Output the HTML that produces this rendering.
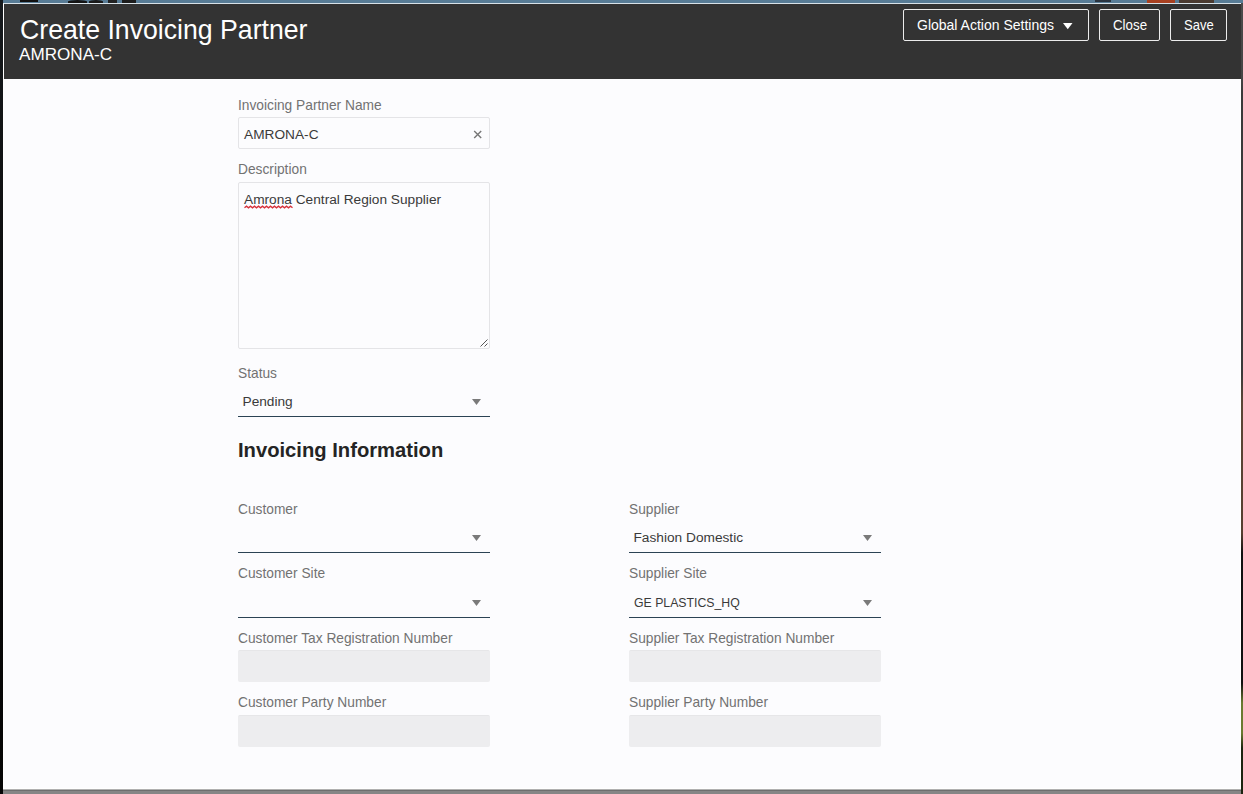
<!DOCTYPE html>
<html><head><meta charset="utf-8">
<style>
html,body{margin:0;padding:0;}
body{width:1243px;height:794px;position:relative;overflow:hidden;background:#2e3236;font-family:"Liberation Sans",sans-serif;}
.abs{position:absolute;}
.topstrip{left:0;top:0;width:1243px;height:3px;background:#587c96;}
.leftstrip{left:0;top:0;width:3px;height:794px;background:linear-gradient(#161a1e 0,#121416 120px,#0c0c0c 400px,#050505 794px);}
.rightstrip{left:1241px;top:3px;width:2px;height:791px;background:linear-gradient(#4a4a4a 0,#454545 75px,#3a3a3a 90px,#3a3a3a 370px,#5b4636 400px,#553f30 530px,#101010 550px,#101010 680px,#6a7a30 700px,#6a7a30 730px,#1c2410 745px,#1c2410 791px);}
.dialog{left:3px;top:3px;width:1238px;height:786px;background:#fcfcfe;box-sizing:border-box;border-top:1px solid #d8e2e8;border-left:1px solid #ffffff;border-right:1px solid #ffffff;border-bottom:1px solid #ffffff;}
.header{left:4px;top:4px;width:1237px;height:75px;background:#333333;}
.bottomstrip{left:3px;top:789px;width:1238px;height:5px;background:linear-gradient(#b0b0b0 0,#b0b0b0 1px,#6e6e6e 1px,#6e6e6e 2px,#858585 2px);}
.t{position:absolute;white-space:nowrap;line-height:1;}
.btn{position:absolute;top:9px;height:32px;box-sizing:border-box;border:1px solid #ececec;border-radius:2px;}
.lbl{color:#727272;font-size:13.75px;}
.val{color:#3a3a3a;font-size:13.7px;}
.underline{position:absolute;height:1px;background:#2b4354;}
.tri{position:absolute;width:0;height:0;border-left:4.5px solid transparent;border-right:4.5px solid transparent;border-top:6px solid #7a7a7a;}
.ro{position:absolute;height:32px;box-sizing:border-box;background:#ededef;border-top:1px solid #e6e6e8;border-radius:2px;}
</style></head>
<body>
<div class="abs topstrip"></div>
<div class="abs" style="left:20px;top:0;width:18px;height:2px;background:#111;"></div>
<div class="abs" style="left:68px;top:0;width:19px;height:3px;background:#141414;border-radius:50% 50% 0 0;"></div>
<div class="abs" style="left:89px;top:0;width:14px;height:3px;background:#1a1a1a;border-radius:50% 50% 0 0;"></div>
<div class="abs" style="left:108px;top:0;width:9px;height:3px;background:#222;"></div>
<div class="abs" style="left:122px;top:0;width:14px;height:3px;background:#1c1c1c;"></div>
<div class="abs" style="left:1095px;top:0;width:16px;height:2px;background:#2a3440;"></div>
<div class="abs" style="left:1147px;top:0;width:28px;height:3px;background:#a84020;"></div>
<div class="abs" style="left:1179px;top:0;width:35px;height:3px;background:#4a3a30;"></div>
<div class="abs leftstrip"></div>
<div class="abs rightstrip"></div>
<div class="abs dialog"></div>
<div class="abs header"></div>
<div class="abs bottomstrip"></div>

<!-- header text -->
<div class="t" style="left:19.5px;top:15.5px;font-size:28px;color:#fff;transform:scaleX(0.952);transform-origin:0 0;">Create Invoicing Partner</div>
<div class="t" style="left:19px;top:46px;font-size:17.1px;color:#fff;">AMRONA-C</div>

<!-- buttons -->
<div class="btn" style="left:903px;width:186px;"></div>
<div class="t" style="left:917px;top:18.2px;font-size:14px;color:#fff;">Global Action Settings</div>
<svg class="abs" style="left:1060px;top:20px;" width="16" height="12" viewBox="0 0 16 12"><polygon points="3,3 12.5,3 7.75,9.3" fill="#fff"/></svg>
<div class="btn" style="left:1099px;width:61px;"></div>
<div class="t" style="left:1113px;top:18.2px;font-size:14px;color:#fff;transform:scaleX(0.951);transform-origin:0 0;">Close</div>
<div class="btn" style="left:1170px;width:57px;"></div>
<div class="t" style="left:1183.6px;top:18.2px;font-size:14px;color:#fff;transform:scaleX(0.93);transform-origin:0 0;">Save</div>

<!-- Invoicing Partner Name -->
<div class="t lbl" style="left:238px;top:98.7px;">Invoicing Partner Name</div>
<div class="abs" style="left:238px;top:117px;width:252px;height:32px;box-sizing:border-box;border:1px solid #e4e4e7;border-radius:2px;"></div>
<div class="t val" style="left:244px;top:127.5px;font-size:13.7px;">AMRONA-C</div>
<svg class="abs" style="left:472.5px;top:129.6px;" width="10" height="10" viewBox="0 0 10 10"><path d="M1.2 1 L8.2 8 M8.2 1 L1.2 8" stroke="#777" stroke-width="1.4"/></svg>

<!-- Description -->
<div class="t lbl" style="left:238px;top:163px;">Description</div>
<div class="abs" style="left:238px;top:182px;width:252px;height:167px;box-sizing:border-box;border:1px solid #e4e4e7;border-radius:2px;"></div>
<div class="t val" style="left:244px;top:192.7px;">Amrona Central Region Supplier</div>
<svg class="abs" style="left:244px;top:205px;" width="50" height="4" viewBox="0 0 50 4"><path d="M0.5 2.8 L2.5 1.2 L4.5 2.8 L6.5 1.2 L8.5 2.8 L10.5 1.2 L12.5 2.8 L14.5 1.2 L16.5 2.8 L18.5 1.2 L20.5 2.8 L22.5 1.2 L24.5 2.8 L26.5 1.2 L28.5 2.8 L30.5 1.2 L32.5 2.8 L34.5 1.2 L36.5 2.8 L38.5 1.2 L40.5 2.8 L42.5 1.2 L44.5 2.8 L46.5 1.2 L48.5 2.8" stroke="#d6303a" stroke-width="1.3" fill="none"/></svg>
<svg class="abs" style="left:479px;top:338px;" width="10" height="10" viewBox="0 0 10 10"><path d="M1.5 8.5 L8.5 1.5 M5.5 8.5 L8.5 5.5" stroke="#555" stroke-width="1" fill="none"/></svg>

<!-- Status -->
<div class="t lbl" style="left:238px;top:367px;">Status</div>
<div class="t val" style="left:242.5px;top:394.8px;">Pending</div>
<svg class="abs" style="left:470px;top:397px;" width="14" height="10" viewBox="0 0 14 10"><polygon points="2,2 11,2 6.5,8" fill="#7a7a7a"/></svg>
<div class="underline" style="left:238px;top:416px;width:252px;"></div>

<!-- Heading -->
<div class="t" style="left:238px;top:439.7px;font-size:20.2px;font-weight:bold;color:#242424;">Invoicing Information</div>

<!-- Customer -->
<div class="t lbl" style="left:238px;top:503px;">Customer</div>
<svg class="abs" style="left:470px;top:533px;" width="14" height="10" viewBox="0 0 14 10"><polygon points="2,2 11,2 6.5,8" fill="#7a7a7a"/></svg>
<div class="underline" style="left:238px;top:552px;width:252px;"></div>

<div class="t lbl" style="left:629px;top:503px;">Supplier</div>
<div class="t val" style="left:633.5px;top:530.5px;">Fashion Domestic</div>
<svg class="abs" style="left:861px;top:533px;" width="14" height="10" viewBox="0 0 14 10"><polygon points="2,2 11,2 6.5,8" fill="#7a7a7a"/></svg>
<div class="underline" style="left:629px;top:552px;width:252px;"></div>

<!-- Site -->
<div class="t lbl" style="left:238px;top:567px;">Customer Site</div>
<svg class="abs" style="left:470px;top:598px;" width="14" height="10" viewBox="0 0 14 10"><polygon points="2,2 11,2 6.5,8" fill="#7a7a7a"/></svg>
<div class="underline" style="left:238px;top:617px;width:252px;"></div>

<div class="t lbl" style="left:629px;top:567px;">Supplier Site</div>
<div class="t val" style="left:633.5px;top:595.8px;transform:scaleX(0.897);transform-origin:0 0;">GE PLASTICS_HQ</div>
<svg class="abs" style="left:861px;top:598px;" width="14" height="10" viewBox="0 0 14 10"><polygon points="2,2 11,2 6.5,8" fill="#7a7a7a"/></svg>
<div class="underline" style="left:629px;top:617px;width:252px;"></div>

<!-- Tax -->
<div class="t lbl" style="left:238px;top:632px;">Customer Tax Registration Number</div>
<div class="ro" style="left:238px;top:650px;width:252px;"></div>
<div class="t lbl" style="left:629px;top:632px;">Supplier Tax Registration Number</div>
<div class="ro" style="left:629px;top:650px;width:252px;"></div>

<!-- Party -->
<div class="t lbl" style="left:238px;top:696px;">Customer Party Number</div>
<div class="ro" style="left:238px;top:715px;width:252px;"></div>
<div class="t lbl" style="left:629px;top:696px;">Supplier Party Number</div>
<div class="ro" style="left:629px;top:715px;width:252px;"></div>

</body></html>
